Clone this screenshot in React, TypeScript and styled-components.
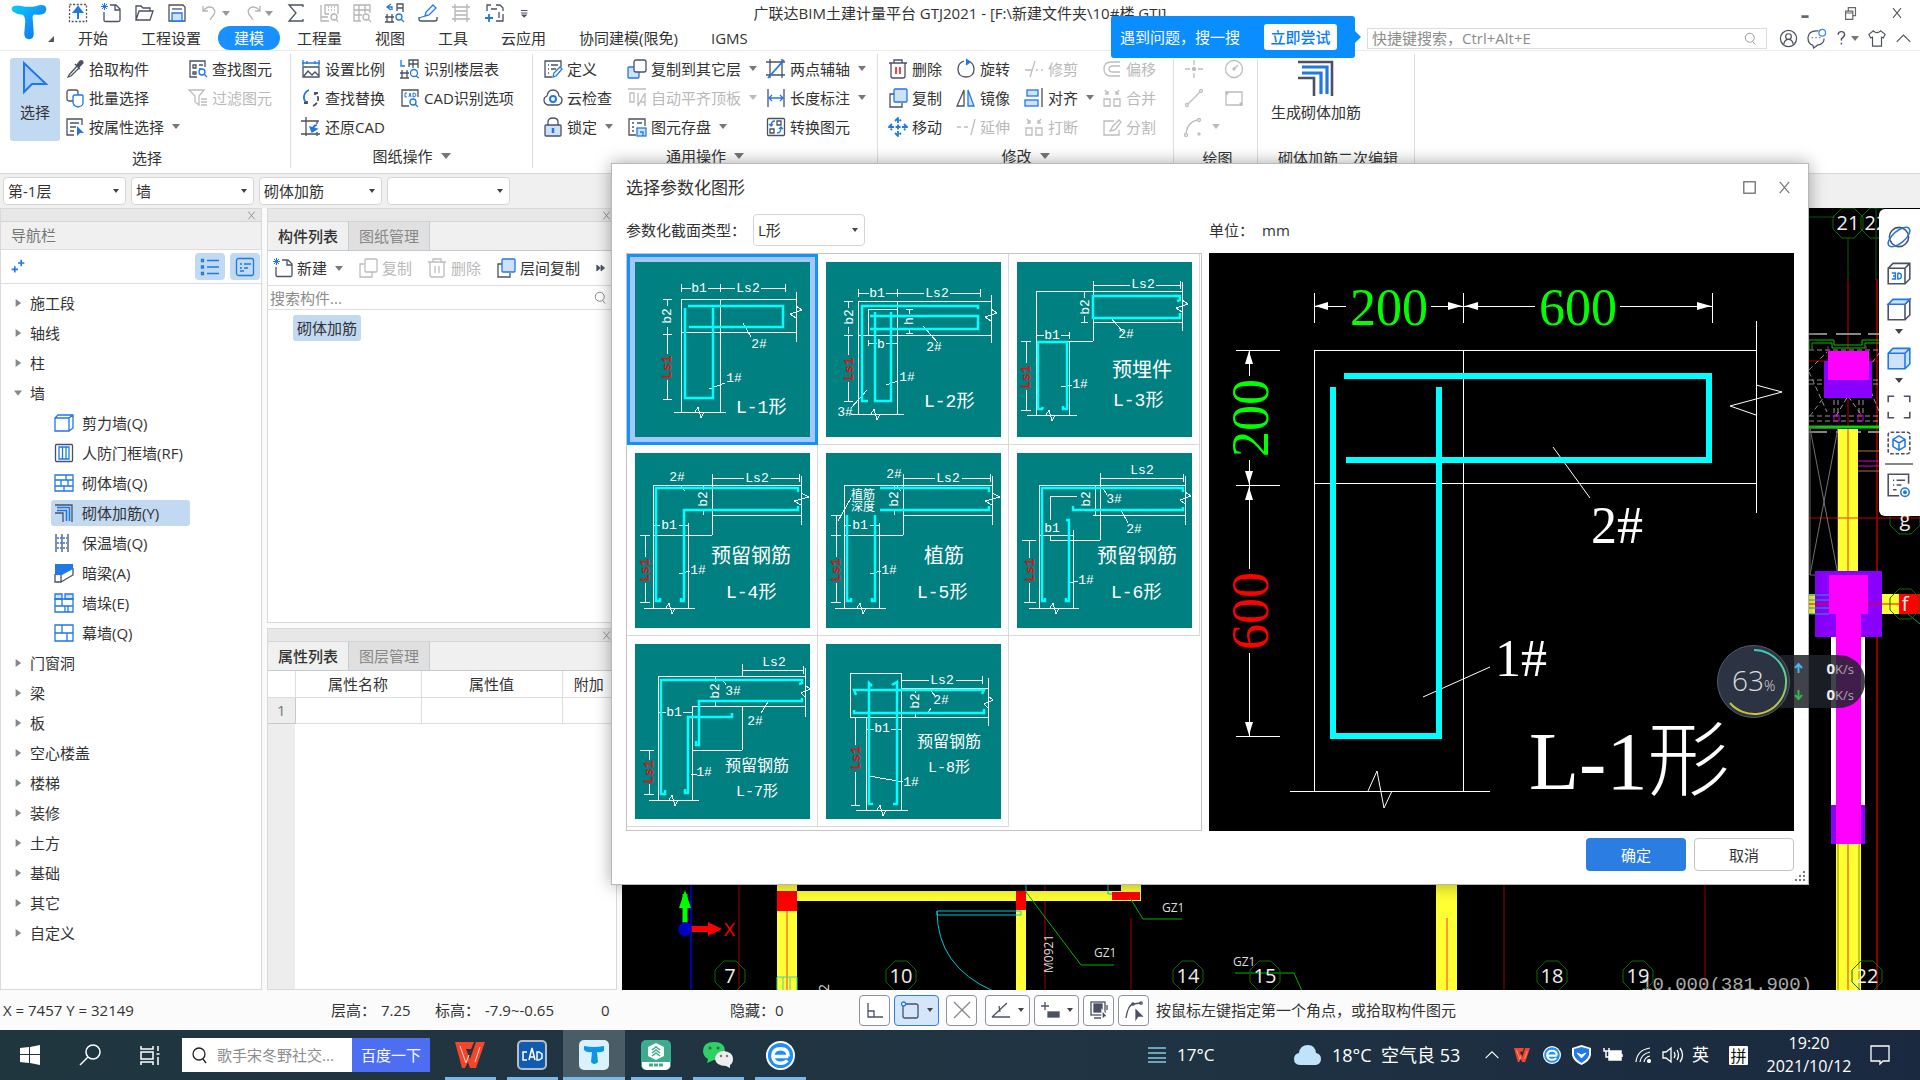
import React from 'react';
import styled, { createGlobalStyle, css } from 'styled-components';

const BLUE = '#1f78e6';
const LIGHT = '#c2d9f2';
const INK = '#4b5163';

const Global = createGlobalStyle`
  * { box-sizing: border-box; }
  html, body { margin: 0; height: 100%; }
  body, button, input, select, table {
    font-family: "Open Sans", "Noto Sans CJK SC", sans-serif;
    font-size: 15px;
    line-height: 20px;
    color: #333;
  }
  button { border: 0; background: none; padding: 0; white-space: nowrap; }
  ul { list-style: none; margin: 0; padding: 0; }
`;

/* ---------- icons, all drawn on a 20 x 20 grid ---------- */

const icons: Record<string, React.ReactNode> = {
  upload: <><rect x="1.5" y="1.5" width="17" height="17" strokeDasharray="2 1.6" /><path d="M10 16V7M6 9l4-5 4 5z" stroke={BLUE} fill={BLUE} strokeWidth="2" /></>,
  newFile: <><path d="M9 2h6l4 4v11q0 1.500-1.500 1.500h-13Q3 18.500 3 17V9M14 2v5h5" /><path d="M1 1l5 5M6 1L1 6M3.500 0v7M0 3.500h7" stroke={BLUE} strokeWidth="1" /></>,
  open: <path d="M2 17V3h5l2 2h7v3M2 17L5 8h14l-3 9z" />,
  save: <><path d="M2 2h14l2 2v14H2z" /><path d="M5 10h10v8H5z" stroke={BLUE} fill="#cfe2fb" /><path d="M5 6h10" /></>,
  undo: <path d="M3 3v5h5M3 8q5-6 10-3 4 4-1 9l-2 3" />,
  redo: <path d="M17 3v5h-5M17 8q-5-6-10-3-4 4 1 9l2 3" />,
  sigma: <path d="M17 4V2H3l7 8-7 8h14v-2" />,
  report: <><path d="M2 2v16h8M6 11V2h13v9M6 11h4M9 4h1M12 4h1M15 4h1M9 7h1M12 7h1M15 7h1M2 14h7" /><circle cx="15" cy="14" r="3" /><path d="M17 16l2 3" /></>,
  gridFind: <><path d="M9 18H2V2h16v8M2 7h16M2 12h8M7 2v16M13 2v8" /><circle cx="14" cy="14" r="3" /><path d="M16 16l3 3" /></>,
  floorFind: <><path d="M2 11v8M7 11v8M0 14h9M12 8V1h6v8M12 5h6M0 19h9" /><path d="M6 1L2 4l4 3M2 4h5v3" stroke={BLUE} /><circle cx="14" cy="14" r="3" stroke={BLUE} /><path d="M16 16l3 3" stroke={BLUE} /></>,
  pencilTray: <><path d="M1 14v2q0 2 2 2h14q2 0 2-2v-2" /><path d="M7 13l1-4 7-7 3 3-7 7zM1 15l6-2" stroke={BLUE} /></>,
  fence: <path d="M4 1v18M16 1v18M1 4h18M1 16h18M4 8h12M4 12h12" />,
  addFrame: <><path d="M3 8V2h4M12 2h4l3 3v3M19 11v7h-7M7 6h6M15 9v6" /><path d="M5 11v8M1 15h8" stroke={BLUE} strokeWidth="1.800" /></>,
  overflow: <path d="M5 7h8M5 10h8M6.500 12.500h5L9 15z" fill="currentColor" />,
  pick: <><path d="M4 16l8-9 2 2-8 8-3 1zM10 5l5 5" /><path d="M12 6l3-4q3-1 3 2l-4 4z" fill="currentColor" /></>,
  batch: <><rect x="2" y="2" width="11" height="11" rx="2" /><path d="M8 13V9q0-2 2-2h7q1 0 1 1v7q0 2-2 3l-3 1q-5-1-5-5z" stroke={BLUE} fill="#fff" /></>,
  byProp: <><path d="M17 8V2H2v16h7M5 6h9M5 10h6M5 14h4" /><path d="M12 9l7 7h-4l-3 3z" fill={BLUE} stroke="none" /></>,
  findEl: <><path d="M17 8V2H2v16h7M5 6h3v3H5zM11 6h4M5 13h3v2H5zM11 10h2" /><circle cx="14" cy="13" r="3" stroke={BLUE} /><path d="M16 15l3 3" stroke={BLUE} /></>,
  filter: <path d="M1 2h15l-5 6v9l-4-3V8zM13 11h6M13 14h6M13 17h6" />,
  scale: <><path d="M2 8h16v10H2zM3 17l4-5 4 4 3-3 4 4" /><path d="M1 4h18M2 1v6M18 1v6M6 2v3M14 2v3" stroke={BLUE} /></>,
  floorTable: <><path d="M2 11v8M7 11v8M0 14h9M9 8V1h9v8M13 1v8M9 5h9M0 19h9" /><path d="M1 1v6h4" stroke={BLUE} /><circle cx="14" cy="14" r="3.500" stroke={BLUE} /><path d="M16 17l3 2" stroke={BLUE} /></>,
  replace: <><path d="M8 2Q2 5 3 11l2 4" stroke={BLUE} strokeWidth="1.800" /><path d="M3 15h3v-4M12 18q6-3 5-9l-2-4M17 5h-3v4" strokeWidth="1.800" strokeDasharray="5 2" /></>,
  cadOpt: <><path d="M9 18H2V2h16v7" /><path d="M7 5H5v4h2M9 9l1-4 1 4M13 5v4q3 0 3-2t-3-2" stroke={BLUE} strokeWidth="1" /><circle cx="13" cy="14" r="3" stroke={BLUE} /><path d="M15 16l3 3" stroke={BLUE} /></>,
  restore: <><path d="M5 0v19M0 4h18M0 17h19M16 4v3M16 15v4" /><path d="M16 8q-4 0-4 4M9 10l2 5 5-3z" stroke={BLUE} fill={BLUE} /></>,
  define: <><path d="M18 8V2H2v16h7M5 6h1M8 6h7M5 10h1M8 10h5M5 14h1" /><path d="M10 18l1-4 6-6 2 2-6 7z" stroke={BLUE} /></>,
  cloudFind: <><path d="M5 17q-4-1-4-5 0-3 3-4 1-6 6-6t6 6q3 1 3 4 0 4-4 5z" /><circle cx="10" cy="11" r="3" stroke={BLUE} strokeWidth="2" /></>,
  lock: <><rect x="2" y="8" width="16" height="11" rx="1" fill="#cfe0f8" /><path d="M5 8V5q0-4 5-4t5 4v3" /><path d="M10 11v5" stroke={BLUE} strokeWidth="2.500" /></>,
  copyLayer: <><rect x="1" y="8" width="11" height="11" rx="1" stroke={BLUE} fill="#cfe2fb" /><rect x="7" y="1" width="12" height="12" rx="2" fill="#fff" /></>,
  flush: <path d="M1 1h18M3 5h4v9H3zM11 5v13l7-13v13M14 14h4" />,
  store: <><path d="M18 9V2H2v16h7M5 6h2M10 6h5M5 10h2M5 14h2" /><rect x="10" y="11" width="9" height="8" stroke={BLUE} fill="#cfe2fb" /><path d="M13 15h3v4" stroke={BLUE} /></>,
  axis2: <><path d="M4 0v19M16 0v19M0 3h19M0 16h19" /><path d="M2 19L18 1" stroke={BLUE} strokeWidth="1.800" /></>,
  length: <><path d="M2 1v18M18 1v18" /><path d="M3 10h14M6 7l-3 3 3 3M14 7l3 3-3 3" stroke={BLUE} /></>,
  convert: <><rect x="1.500" y="1.500" width="17" height="17" rx="1" /><path d="M11 4h4v4h-4zM4 12h4v4H4z" /><path d="M9 4Q5 4 5 9M3 7l2 2 2-2M11 16q4 0 4-5M13 12l2-2 2 2" stroke={BLUE} /></>,
  trash: <><path d="M1 4h18M6 4V1h8v3M3 4v13q0 2 2 2h10q2 0 2-2V4" /><path d="M8 8v7M12 8v7" stroke="#e33" strokeWidth="1.800" /></>,
  trashOff: <path d="M1 4h18M6 4V1h8v3M3 4v13q0 2 2 2h10q2 0 2-2V4M8 8v7M12 8v7" />,
  copy: <><path d="M6 6H2v13h12v-4" /><rect x="6" y="1" width="13" height="13" rx="1" stroke={BLUE} fill="#cfe2fb" /></>,
  copyOff: <><path d="M6 6H2v13h12v-5" /><rect x="7" y="1" width="12" height="13" rx="1" /></>,
  move: <path d="M10 1v18M1 10h18M7 4l3-3 3 3M7 16l3 3 3-3M4 7l-3 3 3 3M16 7l3 3-3 3" stroke={BLUE} strokeWidth="1.800" strokeDasharray="5 1.500" />,
  rotate: <><path d="M12 2q6 2 6 8 0 8-8 8t-8-8q0-6 6-8" /><path d="M10 0l4 3-4 3" stroke={BLUE} fill={BLUE} /></>,
  mirror: <><path d="M8 2v16H1z" /><path d="M12 2v16h6z" stroke={BLUE} fill="#cfe2fb" /></>,
  trim: <path d="M1 11h7M12 11h2M17 11h2M11 2L6 18" />,
  extend: <path d="M1 10h4M8 10h4M19 2l-4 16" />,
  align: <><path d="M18 0v19" /><rect x="3" y="2" width="11" height="6" stroke={BLUE} fill="#cfe2fb" /><rect x="1" y="12" width="13" height="6" stroke={BLUE} fill="#cfe2fb" /></>,
  offset: <path d="M18 3H9Q2 3 2 10t7 7h9M18 7h-7q-4 0-4 3t4 3h7" />,
  merge: <path d="M2 11h6v7H2zM12 11h6v7h-6zM3 2l3 4M6 3v3H3M17 2l-3 4M14 3v3h3" />,
  split: <path d="M12 4H2v14h15v-5M8 14l3-5 6-6 2 2-6 8z" />,
  point: <><path d="M10 1v5M10 14v5M1 10h5M14 10h5" /><circle cx="10" cy="10" r="1.500" fill="currentColor" /></>,
  circle: <><circle cx="10" cy="10" r="8.500" /><path d="M10 10l4-4" /><circle cx="10" cy="10" r="1" /></>,
  line: <><circle cx="3" cy="17" r="1.500" /><circle cx="17" cy="3" r="1.500" /><path d="M4 16L16 4" /></>,
  rect: <><path d="M2 4h16v13H2z" /><circle cx="3" cy="5" r="1" /><circle cx="17" cy="16" r="1" /></>,
  arc: <><circle cx="2" cy="18" r="1.500" /><circle cx="15" cy="3" r="1.500" /><path d="M2 16Q4 5 13 3" /><circle cx="15" cy="17" r="1" /></>,
  rebar: <><path d="M1 2h17v17M1 10h8v9" /><path d="M3 4.500h12.500V18M3 7.500h9.500V18" stroke={BLUE} strokeWidth="1.600" /></>,
  user: <><circle cx="10" cy="10" r="8.500" /><circle cx="10" cy="8" r="3" /><path d="M5 16q1-5 5-5t5 5" /></>,
  chat: <><path d="M12 2q-10-1-11 7 0 7 5 8l1 3 4-3q7-1 7-7M5 9h1M9 9h1M13 9h1" /><circle cx="16" cy="4" r="3.500" stroke="#3a8df0" /></>,
  help: <path d="M4 6q0-4 4-4t4 4q0 2-4 5v2M8 16v2" strokeWidth="1.800" />,
  shirt: <path d="M6 2l-5 4 2 4 2-1v10h10V9l2 1 2-4-5-4q-4 4-8 0z" />,
  chevUp: <path d="M2 14l8-8 8 8" />,
  search: <><circle cx="9" cy="9" r="6" /><path d="M13 14l3 4" /></>,
  min: <path d="M6 14h8" strokeWidth="3" />,
  win: <path d="M4 8h8v9H4zM7 8V4h8v9h-3M4 10h8" />,
  close: <path d="M5 4l10 12M15 4L5 16" />,
  max: <rect x="4" y="4" width="12" height="12" />,
  sparkle: <path d="M14 1v8M10 5h8M6 9v8M2 13h8" stroke={BLUE} strokeWidth="2" />,
  list: <path d="M7 3.500h12M7 10h12M7 16.500h12M1.500 2.500h2v2h-2zM1.500 9h2v2h-2zM1.500 15.500h2v2h-2z" stroke={BLUE} />,
  card: <><rect x="1.500" y="1.500" width="17" height="17" rx="2" stroke={BLUE} /><path d="M5 7h2M9 7h7M5 11h2M9 11h4M5 14h4" stroke={BLUE} /></>,
  wall: <path d="M1 5h14v13H1zM1 5l3-3h15v13l-4 3M15 5l4-3" stroke={BLUE} />,
  door: <><rect x="1.500" y="1.500" width="17" height="17" rx="1" /><path d="M5 4h10v12H5zM8.500 4v12M12 4v12" stroke={BLUE} /></>,
  brick: <path d="M1 2h18v16H1zM1 7h18M1 13h18M12 2v5M7 7v6M14 7v6M10 13v5" stroke={BLUE} />,
  insul: <><path d="M2 1v18M8 1v18M14 1v18" /><path d="M3 5h10M3 10h10M3 15h10" stroke={BLUE} strokeDasharray="2 1" /></>,
  beam: <><path d="M1 11v8h6v-8M7 19l12-7V5" /><path d="M1 1h18v5L8 12H1z" fill={BLUE} stroke="none" /></>,
  pier: <><path d="M1 1h7v5H1zM11 1h8v5h-8z" stroke={BLUE} fill="#cfe2fb" /><path d="M1 6h18v13H1zM8 6v7M1 13h18M11 13v6M14 13v6" stroke={BLUE} /></>,
  curtain: <path d="M1 2h18v16H1zM1 10h18M8 2v8M13 10v8" stroke={BLUE} />,
  orbit: <><circle cx="10" cy="10" r="8" /><ellipse cx="10" cy="10" rx="11" ry="5" transform="rotate(-40 10 10)" stroke={BLUE} /></>,
  cube3d: <><path d="M1 6h14v13H1zM1 6l4-4h14v13l-4 4M15 6l4-4" /><path d="M4 10h3v5H4M5 12.500h2M9 10v5q3 0 3-2.500T9 10" stroke={BLUE} strokeWidth="1.200" /></>,
  cubeTop: <><path d="M1 6h14v13H1zM15 6l4-4v13l-4 4" /><path d="M1 6l4-4h14l-4 4z" stroke={BLUE} fill="#cfe2fb" /></>,
  cubeFill: <path d="M1 6l4-4h14v13l-4 4H1zM1 6h14v13M15 6l4-4" stroke={BLUE} fill="#cfe2fb" />,
  frame: <path d="M1 6V1h5M14 1h5v5M19 14v5h-5M6 19H1v-5" />,
  cubeFrame: <><rect x="1" y="1" width="18" height="18" rx="2" strokeDasharray="3 1.500" /><path d="M10 4l5 3v6l-5 3-5-3V7zM5 7l5 3 5-3M10 10v6" stroke={BLUE} /></>,
  listEye: <><path d="M18 9V1H1v18h9M5 6h1M8 6h7M5 10h1M8 10h4M5 14h3" /><circle cx="15" cy="16" r="3.500" stroke={BLUE} /><circle cx="15" cy="16" r="1" fill={BLUE} stroke={BLUE} /></>,
  ortho: <path d="M3 3v14h15M3 11h6v6" />,
  snapRect: <><rect x="3" y="4" width="15" height="14" rx="2" /><circle cx="3.500" cy="4" r="2" stroke={BLUE} fill="#fff" /></>,
  cross: <path d="M2 2l16 16M18 2L2 18" />,
  angle: <path d="M1 17h18M1 17L16 3M8 6l1 6" />,
  plusBar: <><path d="M5 2v8M1 6h8" /><rect x="8" y="12" width="11" height="5" fill="currentColor" /></>,
  layers: <><rect x="2" y="2" width="14" height="13" /><rect x="5" y="4" width="8" height="8" fill="currentColor" /><path d="M5 18h7M18 5v5" /><path d="M13 10l6 7h-3l-3 3z" fill="currentColor" stroke="#fff" /></>,
  curve: <><path d="M2 18Q4 5 9 4l8-1" /><circle cx="9" cy="4" r="1.200" /><circle cx="17" cy="3" r="1.200" /><path d="M12 10l6 6h-4l-2 3z" fill="currentColor" /></>,
  more: <path d="M3 5l6 5-6 5zM10 5l6 5-6 5z" fill="currentColor" />,
};

const Svg = styled.svg<{ $s?: number }>`
  width: ${p => p.$s ?? 20}px;
  height: ${p => p.$s ?? 20}px;
  flex: none;
  fill: none;
  overflow: visible;
`;
const Icon = ({ n, s, c = INK }: { n: string; s?: number; c?: string }) => (
  <Svg $s={s} viewBox="0 0 20 20" stroke="currentColor" strokeWidth="1.300" color={c} aria-hidden="true">{icons[n]}</Svg>
);

const Caret = styled.i<{ $c?: string }>`
  flex: none;
  width: 0; height: 0;
  border: 4px solid transparent;
  border-top: 5px solid ${p => p.$c ?? '#777'};
  border-bottom: 0;
`;

/* ---------- header ---------- */

const Page = styled.div`
  position: relative;
  display: flex;
  flex-direction: column;
  height: 100vh;
  overflow: hidden;
  background: #fff;
`;
const Header = styled.header`
  position: relative;
  border-bottom: 1px solid #ececec;
`;
const Logo = styled.div`
  position: absolute;
  left: 10px; top: 4px;
`;
const TitleRow = styled.div`
  display: grid;
  grid-template-columns: 1fr auto 1fr;
  align-items: center;
  height: 26px;
`;
const Quick = styled.div`
  display: flex;
  align-items: center;
  gap: 13px;
  padding-left: 68px;
  button { display: flex; align-items: center; gap: 2px; }
`;
const Title = styled.h1`
  margin: 0;
  font-size: 15px;
  font-weight: 400;
`;
const WinButtons = styled.div`
  display: flex;
  justify-content: flex-end;
  button { width: 46px; height: 26px; display: grid; place-items: center; }
`;
const TabRow = styled.nav`
  display: flex;
  gap: 1px;
  height: 24px;
  padding-left: 62px;
`;
const Tab = styled.button<{ $on?: boolean }>`
  height: 24px;
  padding: 0 16px;
  border-radius: 12px;
  ${p => p.$on && css`background: #1890ff; color: #fff;`}
`;
const HeadRight = styled.div`
  display: flex;
  align-items: center;
  gap: 9px;
  margin-left: auto;
  padding-right: 8px;
  > button { display: flex; align-items: center; }
`;
const SearchWrap = styled.label`
  position: relative;
  display: flex;
  align-items: center;
  width: 400px;
  height: 21px;
  margin-right: 3px;
  padding: 0 8px 0 4px;
  border: 1px solid #dcdcdc;
`;
const PlainInput = styled.input`
  flex: 1;
  min-width: 0;
  border: 0;
  outline: 0;
  padding: 0;
  background: none;
  &::placeholder { color: #8c8c8c; opacity: 1; }
`;
const Tip = styled.div`
  position: absolute;
  right: calc(100% + 13px);
  top: -13px;
  z-index: 2;
  display: flex;
  align-items: center;
  justify-content: space-between;
  width: 244px;
  height: 42px;
  padding: 0 18px 0 9px;
  border-radius: 3px;
  background: #0a8dff;
  color: #fff;
  white-space: nowrap;
  &::after {
    content: '';
    position: absolute;
    left: 100%; top: 15px;
    border: 6px solid transparent;
    border-left-color: #0a8dff;
    border-right: 0;
  }
  button {
    width: 73px; height: 26px;
    border-radius: 3px;
    background: #fff;
    color: #0a7df5;
    font-weight: 500;
  }
`;

/* ---------- ribbon ---------- */

const Ribbon = styled.div`
  display: flex;
  height: 122px;
`;
const Group = styled.section<{ $w: number }>`
  display: flex;
  flex-direction: column;
  width: ${p => p.$w}px;
  margin: 3px 0 5px;
  padding: 0 0 0 10px;
  border-right: 1px solid #dedede;
`;
const GroupBody = styled.div`
  display: flex;
  height: 90px;
`;
const GroupName = styled.div<{ $plain?: boolean }>`
  display: flex;
  align-items: center;
  justify-content: center;
  gap: 8px;
  margin-left: ${p => (p.$plain ? -6 : -10)}px;
  padding-top: ${p => (p.$plain ? 4 : 2)}px;
  i { border-width: 6px 5px 0; }
`;
const Col = styled.div<{ $w?: number }>`
  width: ${p => (p.$w ? p.$w + 'px' : 'auto')};
`;
const ToolBtn = styled.button<{ $off?: boolean }>`
  display: flex;
  align-items: center;
  gap: 4px;
  height: 29px;
  color: ${p => (p.$off ? '#b9b9b9' : '#333')};
  i { margin-left: 4px; }
`;
const BigBtn = styled.button<{ $on?: boolean; $w: number }>`
  display: flex;
  flex-direction: column;
  align-items: center;
  gap: 4px;
  width: ${p => p.$w}px;
  height: 83px;
  margin: 4px 5px 0 0;
  padding-top: ${p => (p.$on ? 2 : 0)}px;
  border-radius: 3px;
  background: ${p => (p.$on ? LIGHT : 'none')};
`;
type ToolDef = [string, string, boolean?, boolean?];
const Tools = ({ w, items }: { w?: number; items: ToolDef[] }) => (
  <Col $w={w}>
    {items.map(([icon, text, caret, off]) => (
      <ToolBtn key={icon + text} $off={off} aria-label={text || icon}>
        <Icon n={icon} c={off ? '#bdbdbd' : INK} />
        {text}
        {caret && <Caret $c={off ? '#bbb' : undefined} />}
      </ToolBtn>
    ))}
  </Col>
);

const FilterRow = styled.div`
  display: flex;
  gap: 5px;
  height: 35px;
  padding: 3px 3px;
  border-top: 1px solid #d8d8d8;
  background: #f0f0f0;
`;
const SelectBox = styled.label<{ $w: number; $h: number }>`
  position: relative;
  width: ${p => p.$w}px;
  height: ${p => p.$h}px;
  select {
    width: 100%; height: 100%;
    appearance: none;
    padding: 0 4px;
    border: 1px solid #d5d5d5;
    border-radius: 4px;
    background: #fff;
  }
  i { position: absolute; right: 7px; top: calc(50% - 2px); border-width: 4px 3px 0; border-top-color: #444; }
`;
const Select = ({ w, h, label, value }: { w: number; h: number; label: string; value: string }) => (
  <SelectBox $w={w} $h={h}>
    <select aria-label={label}><option>{value}</option></select>
    <Caret />
  </SelectBox>
);

/* ---------- work area ---------- */

const Work = styled.main`
  flex: 1;
  min-height: 0;
  display: grid;
  grid-template-columns: 262px 350px 1fr;
  column-gap: 5px;
  background: #fafafa;
`;
const Panel = styled.section<{ $grow?: boolean }>`
  display: flex;
  flex-direction: column;
  min-height: 0;
  flex: ${p => (p.$grow ? '1' : 'none')};
  border: 1px solid #d9d9d9;
  background: #fff;
`;
const Strip = styled.div`
  display: flex;
  justify-content: flex-end;
  align-items: center;
  height: 13px;
  padding-right: 3px;
  background: #e7e7e7;
  border-bottom: 1px solid #d4d4d4;
  button { display: flex; }
`;
const NavTitle = styled.h2`
  margin: 0;
  height: 28px;
  padding: 3px 10px;
  font-size: 15px;
  font-weight: 400;
  color: #777;
  background: #f0f0f0;
  border-bottom: 1px solid #ddd;
`;
const NavTools = styled.div`
  display: flex;
  align-items: center;
  gap: 5px;
  height: 34px;
  padding: 0 1px 0 9px;
  border-bottom: 1px solid #ddd;
  span { flex: 1; }
`;
const SquareBtn = styled.button`
  display: grid;
  place-items: center;
  width: 30px; height: 27px;
  border-radius: 4px;
  background: ${LIGHT};
`;
const Tree = styled.ul`
  padding-top: 4px;
`;
const Node = styled.button`
  display: flex;
  align-items: center;
  height: 30px;
  padding-left: 13px;
  gap: 8px;
`;
const Arrow = styled.i<{ $open?: boolean }>`
  width: 8px; height: 8px;
  background: #888;
  clip-path: ${p => (p.$open ? 'polygon(0 20%, 100% 20%, 50% 85%)' : 'polygon(20% 0, 90% 50%, 20% 100%)')};
`;
const LeafRow = styled.li`
  display: flex;
  align-items: center;
  height: 30px;
  padding-left: 50px;
`;
const Leaf = styled.button<{ $on?: boolean }>`
  display: flex;
  align-items: center;
  gap: 8px;
  width: 139px;
  height: 26px;
  padding-left: 3px;
  border-radius: 3px;
  background: ${p => (p.$on ? LIGHT : 'none')};
`;
const MidCol = styled.div`
  display: flex;
  flex-direction: column;
  gap: 5px;
  min-height: 0;
  min-width: 0;
`;
const PanelTabs = styled.div`
  display: flex;
  height: 29px;
  background: #f0f0f0;
  border-bottom: 1px solid #c6cbd3;
`;
const PanelTab = styled.button<{ $on?: boolean }>`
  width: 81px;
  border: 1px solid #c6cbd3;
  border-width: 0 1px 0 0;
  background: ${p => (p.$on ? '#f0f0f0' : '#e0e0e0')};
  color: ${p => (p.$on ? '#333' : '#888')};
  font-weight: ${p => (p.$on ? 500 : 400)};
`;
const ListTools = styled.div`
  display: flex;
  align-items: center;
  gap: 15px;
  height: 35px;
  padding-left: 5px;
  border-bottom: 1px solid #ddd;
  overflow: hidden;
`;
const ListSearch = styled.label`
  display: flex;
  align-items: center;
  height: 24px;
  padding: 0 8px 0 2px;
  border-bottom: 1px solid #ddd;
`;
const ListBody = styled.ul`
  height: 312px;
  padding: 5px 0 0 25px;
  button { height: 26px; padding: 0 4px; border-radius: 3px; background: ${LIGHT}; }
`;
const PropArea = styled.div`
  flex: 1;
  background: linear-gradient(90deg, #ededed 27px, #fff 27px);
`;
const PropTable = styled.table`
  width: 100%;
  table-layout: fixed;
  border-collapse: collapse;
  background: #fff;
  th, td {
    height: 26px;
    padding: 0;
    border: 1px solid #ddd;
    border-width: 0 1px 1px 0;
    font-weight: 400;
    text-align: center;
  }
  tbody th { background: #ededed; color: #777; border-color: #c8c8c8; }
`;

/* ---------- drawing canvas ---------- */

const Stage = styled.div`
  position: relative;
  min-width: 0;
  overflow: hidden;
  background: #000;
`;
const Drawing = styled.svg`
  display: block;
  width: 100%;
  height: 100%;
  fill: none;
  text { font-family: "Open Sans", sans-serif; }
`;
const Elevation = styled.text`
  && { font-family: "Liberation Mono", monospace; }
  font-size: 19px;
  fill: #aaa;
`;
const Bubble = ({ x, y, t }: { x: number; y: number; t: string }) => (
  <g>
    <path d={`M${x - 6} ${y - 15}h12l9 9v12l-9 9h-12l-9-9v-12z`} stroke="#0a6a0a" />
    <text x={x} y={y + 7} fontSize="20" fill="#eee" textAnchor="middle">{t}</text>
  </g>
);
const ViewTools = styled.aside`
  position: absolute;
  right: 0; top: 1px;
  display: flex;
  flex-direction: column;
  align-items: center;
  gap: 12px;
  width: 41px;
  height: 307px;
  padding: 16px 2px 0 0;
  border-radius: 6px 0 0 6px;
  background: #fff;
  button { display: flex; flex-direction: column; align-items: center; gap: 8px; }
  svg { width: 24px; height: 24px; }
  hr { width: 28px; height: 2px; margin: -4px 0; border: 0; background: #888; }
`;

const Plan = () => (
  <Drawing viewBox="622 208 1298 782" preserveAspectRatio="xMinYMin slice" aria-label="平面图">
    <path d="M739 880v110M1045 880v110M1131 918v72M1504 880v110M1705 880v110" stroke="#a00000" />
    <path d="M691 880v110" stroke="#0000b0" strokeWidth="2" />
    <path d="M777 880h20v110h-20zM797 891h344v10H797zM1016 900h10v90h-10zM1121 880h20v12h-20zM1436 880h21v110h-21z" fill="#ffff33" />
    <path d="M777 891h20v20h-20zM1016 891h10v19h-10zM1112 892h28v8h-28z" fill="#f00" />
    <path d="M787 911v79M1447 918v72" stroke="#f33" />
    <path d="M777 977h20M777 977v13M783 977v13M790 977v13M797 977v13" stroke="#3fd8a0" />
    <path d="M937 911h84v4h-84zM937 911q0 55 56 80M1026 880v12M1108 880v14h4" stroke="#00c8d8" />
    <path d="M1026 892l55 73h33M1130 898l13 21h39M1235 973h59l8 18" stroke="#00b400" />
    <path d="M685 928v-34" stroke="#0f0" strokeWidth="5" />
    <path d="M679 908l6-18 6 18z" fill="#0f0" />
    <path d="M685 929h28" stroke="#f00" strokeWidth="6" />
    <path d="M708 922l14 7-14 7z" fill="#f00" />
    <circle cx="685" cy="929" r="7" fill="#0000c0" />
    <text x="724" y="936" fontSize="19" fill="#f00">X</text>
    <g fontSize="12" fill="#ddd">
      <text x="1162" y="912">GZ1</text>
      <text x="1094" y="957">GZ1</text>
      <text x="1233" y="966">GZ1</text>
      <text transform="translate(1053 973) rotate(-90)">M0921</text>
      <text transform="translate(829 992) rotate(-90)" fontSize="14">2</text>
    </g>
    <Elevation x="1641" y="990">10.000(381.900)</Elevation>
    <Bubble x={730} y={976} t="7" /><Bubble x={901} y={976} t="10" /><Bubble x={1188} y={976} t="14" />
    <Bubble x={1265} y={976} t="15" /><Bubble x={1552} y={976} t="18" /><Bubble x={1638} y={976} t="19" />

    <path d="M1800 217h35M1848 238v42M1876 208v72" stroke="#0a5a0a" />
    <path d="M1877 279v711" stroke="#8a0000" strokeWidth="2" />
    <path d="M1848 279v148M1809 361h71M1809 518h111" stroke="#c00000" />
    <path d="M1809 334h18M1836 334h25M1868 334h12M1809 432h18M1836 432h25M1868 432h12" stroke="#888" strokeWidth="2" />
    <path d="M1809 350h71M1809 380h71M1809 384h71M1809 416h71M1809 421h71M1834 384v32M1838 384v32M1859 384v32M1863 384v32M1809 370l18-18M1809 372l18 40M1810 416l22-30M1836 416l12-20 14 20M1880 352l-12 16M1868 384l12 30" stroke="#999" strokeDasharray="5 3" />
    <path d="M1809 350v-10h25v5h28v-5h18M1812 350v-7h20v5h33v-5h15" stroke="#00c800" />
    <path d="M1809 427h71" stroke="#00d800" strokeWidth="3" />
    <path d="M1824 361h48v37h-48z" fill="#8a00ff" />
    <path d="M1828 351h41v29h-41z" fill="#f0f" />
    <path d="M1834 415h5v6h-5zM1858 415h5v6h-5zM1828 346v6M1866 346v6" stroke="#c0c" />
    <path d="M1810 428h28v147h-28zM1810 428l28 147M1838 428l-28 147" stroke="#777" />
    <path d="M1838 429h20v146h-20zM1809 594h90v20h-90zM1836 844h25v146h-25z" fill="#ffff33" />
    <path d="M1858 451h22M1858 471h22" stroke="#b07040" />
    <path d="M1858 461h22M1858 466h22" stroke="#d0d" />
    <path d="M1848 429v146M1848 844v146M1838 518h20" stroke="#e04000" />
    <path d="M1838 844v146M1859 844v146" stroke="#998c00" />
    <path d="M1899 594h21v20h-21z" fill="#f00" />
    <path d="M1815 571h67v66h-67zM1831 805h34v39h-34z" fill="#8a00ff" />
    <path d="M1831 637h34v168h-34z" fill="#fff" />
    <path d="M1829 575h39v39h-7v230h-25V614h-7z" fill="#f0f" />
    <path d="M1809 595h20M1809 600h20M1809 608h20M1809 614h20" stroke="#20a0e0" />
    <path d="M1809 604h20M1868 604h52" stroke="#f00" />
    <path d="M1908 614l12 10" stroke="#0a0" />
    <Bubble x={1848} y={223} t="21" /><Bubble x={1876} y={223} t="22" />
    <Bubble x={1905} y={519} t="g" /><Bubble x={1905} y={604} t="f" /><Bubble x={1867} y={976} t="22" />
  </Drawing>
);

/* ---------- dialog ---------- */

const Dialog = styled.section`
  position: absolute;
  left: 611px; top: 163px;
  width: 1198px;
  display: flex;
  flex-direction: column;
  padding: 0 14px 13px;
  border: 1px solid #b8b8b8;
  background: #fff;
  box-shadow: 0 0 16px rgba(0, 0, 0, .35);
`;
const DlgHead = styled.header`
  display: flex;
  align-items: center;
  height: 47px;
  h2 { flex: 1; margin: 0; font-size: 17px; font-weight: 400; }
  button { display: flex; margin-left: 16px; }
`;
const DlgForm = styled.div`
  display: grid;
  grid-template-columns: 127px 112px 1fr 585px;
  align-items: center;
  height: 42px;
  padding-bottom: 4px;
  > div { grid-column: 4; display: flex; gap: 8px; }
`;
const DlgBody = styled.div`
  display: grid;
  grid-template-columns: 576px 585px;
  justify-content: space-between;
`;
const Gallery = styled.div`
  display: grid;
  grid-template-columns: repeat(3, 191px);
  grid-auto-rows: 191px;
  height: 578px;
  border: 1px solid #c4c4c4;
`;
const Cell = styled.button<{ $on?: boolean }>`
  display: grid;
  place-items: center;
  border: 1px solid #d9d9d9;
  border-width: 0 1px 1px 0;
  ${p => p.$on && css`
    border: 3px solid #1391ff;
    background: #a5c8fb;
  `}
`;
const Thumb = styled.svg`
  display: block;
  width: 175px; height: 175px;
  background: #008080;
  fill: none;
  text { font-family: "Liberation Mono", "Noto Sans CJK SC", monospace; font-size: 13px; fill: #fff; }
`;
const RedText = styled.text`
  && { fill: #e01010; font-weight: 700; }
`;
const Preview = styled.svg`
  display: block;
  width: 585px; height: 578px;
  background: #000;
  fill: none;
  text { font-family: "Liberation Serif", "Noto Sans CJK SC", serif; font-weight: 300; font-size: 52px; fill: #fff; }
`;
const DlgFoot = styled.footer`
  display: flex;
  justify-content: flex-end;
  gap: 8px;
  padding-top: 7px;
`;
const DlgBtn = styled.button<{ $main?: boolean }>`
  width: 100px; height: 33px;
  border-radius: 4px;
  ${p => (p.$main ? css`background: #2b7de1; color: #fff;` : css`border: 1px solid #c4c4c4;`)}
`;
const Grip = styled.svg`
  position: absolute;
  right: 3px; bottom: 3px;
  width: 10px; height: 10px;
`;

type Dim = [string, number, number];
type Shape = {
  white: string;
  cyan: string;
  red: Dim;
  up: Dim[];
  flat: Dim[];
  names: [string, number, number, number][];
};

const shapes: Shape[] = [
  {
    white: 'M46 22v8M85 22v8M150 22v8M46 26h10M73 26h27M126 26h24M28 37h9M28 72h9M28 137h9M32 37v7M32 65v7M32 72v20M32 118v19M46 37h115M46 37v113M85 37v113M46 70h115M161 30v50M161 44l6 4-12 4 6 4M39 150h52M60 150l3-5 3 11 3-6M108 61l8 14M74 127l16-6',
    cyan: 'M53 44h95v21H54M50 46v90h28V46',
    red: ['Ls1', 36, 105], up: [['b2', 36, 54]],
    flat: [['b1', 64, 30], ['Ls2', 113, 30], ['2#', 124, 86], ['1#', 99, 120]],
    names: [['L-1形', 101, 151, 18]],
  },
  {
    white: 'M32 27v8M71 27v8M154 27v8M32 31h11M60 31h38M124 31h30M18 39h9M18 73h9M18 139h9M22 39v7M22 65v7M22 73v20M22 120v19M32 39h133M32 73h133M32 39v113M71 39v113M165 33v48M165 47l6 4-12 4 6 4M25 152h53M45 152l3-5 3 11 3-6M42 47h29M42 47v26M42 78v6M42 81h9M60 81h11M83 47v5M83 66v5M80 47h7M80 71h7M97 64l15 17M60 123l12-4M41 128l-16 18',
    cyan: 'M152 47v-3H36v95h6M44 54h108v13H44M49 50v89h16V50',
    red: ['Ls1', 27, 107], up: [['b2', 27, 55], ['h', 87, 59]],
    flat: [['b1', 51, 35], ['Ls2', 111, 35], ['b', 55, 86], ['2#', 108, 89], ['1#', 81, 119], ['3#', 19, 154]],
    names: [['L-2形', 98, 145, 18]],
  },
  {
    white: 'M76 19v10M163 19v8M76 23h37M139 23h24M19 29h146M19 29v124M19 79h57M76 29v50M76 60h89M165 20v49M165 38l6 4-12 4 6 4M52 79v74M10 153h50M29 153l3-5 3 11 3-6M64 29h7M64 60h7M67 29v7M67 54v6M19 70v7M52 70v7M19 73h8M44 73h8M4 79h10M4 148h10M9 79v22M9 128v20M93 55l14 16M44 125l11-2',
    cyan: 'M160 39l3-1v-4H76v22h87v-5M26 145l-1 2h-4V80h29v67h-4v-3',
    red: ['Ls1', 13, 115], up: [['b2', 72, 45]],
    flat: [['Ls2', 126, 26], ['b1', 35, 77], ['2#', 109, 76], ['1#', 63, 126]],
    names: [['预埋件', 95, 115, 20], ['L-3形', 96, 144, 18]],
  },
  {
    white: 'M77 21v10M164 21v8M77 25h32M136 25h28M18 32h148M18 32v123M18 82h59M77 29v53M77 62h89M166 23v49M166 40l8 4-15 4 7 4M53 70v85M9 155h51M31 155l3-5 3 11 3-6M68 32v5M68 57v5M18 72h7M44 72h9M5 82h10M5 149h10M10 82v22M10 130v19M45 32l5 6M44 121l11-3',
    cyan: 'M163 39v-4H21v113h4v-3M163 53v4H49v91h-3v-3',
    red: ['Ls1', 14, 117], up: [['b2', 72, 46]],
    flat: [['Ls2', 122, 29], ['b1', 34, 76], ['2#', 42, 28], ['1#', 63, 121]],
    names: [['预留钢筋', 76, 110, 20], ['L-4形', 91, 145, 18]],
  },
  {
    white: 'M77 21v10M164 21v8M77 25h32M136 25h28M18 32h148M18 32v123M18 82h59M77 29v53M77 62h89M166 23v49M166 40l8 4-15 4 7 4M53 70v85M9 155h51M31 155l3-5 3 11 3-6M68 32v5M68 57v5M18 72h7M44 72h9M5 62h10M5 82h10M5 149h10M10 62v42M10 130v19M70 32l5 6M12 68l13-23M44 121l11-3',
    cyan: 'M54 35h109v4M54 57h109v-4M21 62v86h4v-3M49 62v86h-3v-3',
    red: ['Ls1', 14, 117], up: [['b2', 72, 46]],
    flat: [['Ls2', 122, 29], ['b1', 34, 76], ['2#', 68, 25], ['1#', 63, 121]],
    names: [['植筋', 25, 46, 12], ['深度', 25, 58, 12], ['植筋', 98, 110, 20], ['L-5形', 91, 145, 18]],
  },
  {
    white: 'M83 20v67M166 21v8M83 25h83M22 32h146M22 32v123M22 82h34M56 77v78M33 87h50M33 43v24M33 83v4M33 43h27M76 62h92M78 32v30M168 23v49M168 39l6 4-11 4 5 4M12 155h50M33 155l3-5 3 11 3-6M5 87h14M7 149h12M12 87v18M12 130v19M86 35l4 7M104 57l7 13M53 130l8-2',
    cyan: 'M166 39v-4H25v113h3v-3M166 54v3H56v-4M49 67h3v81h-3v-3',
    red: ['Ls1', 17, 117], up: [['b2', 73, 46]],
    flat: [['Ls2', 125, 21], ['b1', 35, 79], ['3#', 97, 50], ['2#', 117, 80], ['1#', 69, 131]],
    names: [['预留钢筋', 80, 110, 20], ['L-6形', 94, 145, 18]],
  },
  {
    white: 'M107 20v12M168 22v8M107 26h61M23 32h147M23 32v124M57 62v94M57 62h113M107 62v44M57 106h50M170 24v49M170 41l5 4-9 4 4 4M14 156h50M34 156l3-5 3 11 3-6M80 32v6M80 57v5M23 68h8M48 68h9M5 106h14M9 150h10M14 106v10M14 140v10M88 36l3 5M133 58l-7 11M56 131l6-1',
    cyan: 'M164 40l3-1v-3H26v114h4v-4M167 54v3H64v44h-3v-4M97 69v4H53v76h-3v-4',
    red: ['Ls1', 18, 128], up: [['b2', 84, 47]],
    flat: [['Ls2', 139, 22], ['b1', 39, 72], ['3#', 98, 51], ['2#', 120, 81], ['1#', 69, 132]],
    names: [['预留钢筋', 90, 127, 16], ['L-7形', 101, 152, 15]],
  },
  {
    white: 'M24 29h51v44H24zM75 36h28M130 36h26M156 32v8M75 44h87M75 73h87M162 34v48M162 52l5 4-9 4 4 4M40 73v93M75 73v93M30 166h52M51 166l3-5 3 11 3-6M89 44v5M89 68v5M40 85h8M65 85h10M29 73v28M29 128v33M25 161h9M105 47l5 6M105 64l-4 6M43 132l34 6',
    cyan: 'M30 51l-2-5h130l-2 4M28 66v3h130v-4M46 42l-3-3v121h4M66 41l5-3v122h-4',
    red: ['Ls1', 34, 114], up: [['b2', 93, 57]],
    flat: [['Ls2', 116, 40], ['b1', 56, 88], ['2#', 115, 60], ['1#', 85, 142]],
    names: [['预留钢筋', 91, 103, 16], ['L-8形', 102, 128, 15]],
  },
];

const ShapeThumb = ({ s }: { s: Shape }) => (
  <Thumb viewBox="0 0 175 175">
    <path d={s.white} stroke="#fff" shapeRendering="crispEdges" />
    <path d={s.cyan} stroke="#0ff" strokeWidth="2.500" />
    {s.flat.map(([t, x, y]) => <text key={t + x} x={x} y={y} textAnchor="middle">{t}</text>)}
    {s.up.map(([t, x, y]) => <text key={t + x} transform={`translate(${x} ${y}) rotate(-90)`} textAnchor="middle">{t}</text>)}
    <RedText transform={`translate(${s.red[1]} ${s.red[2]}) rotate(-90)`} textAnchor="middle">{s.red[0]}</RedText>
    {s.names.map(([t, x, y, f]) => <text key={t + x} x={x} y={y} style={{ fontSize: f }}>{t}</text>)}
  </Thumb>
);

const ShapePreview = () => (
  <Preview viewBox="0 0 585 578" aria-label="L-1形">
    <g stroke="#fff" shapeRendering="crispEdges">
      <path d="M105 40v30M254 40v30M503 40v30M105 53h32M222 53h32M254 53h72M411 53h92" />
      <path d="M27 97h44M27 232h44M27 483h44M40 97v26M40 207v25M40 232v84M40 400v83" />
      <path d="M105 97h442M105 97v441M254 97v441M105 230h442M547 68v192M81 538h200" />
    </g>
    <path d="M547 132l26 7-52 14 26 9M159 538l9-20 7 37 8-17M344 194l37 51M214 444l67-30" stroke="#fff" />
    <path d="M106 53l13-4v8zM253 53l-14-4v8zM256 53l13-4v8zM502 53l-14-4v8zM40 98l-4 13h8zM40 231l-4-13h8zM40 234l-4 13h8zM40 482l-4-13h8z" fill="#fff" />
    <path d="M135 123h365v84H137M124 134v349h106V134" stroke="#0ff" strokeWidth="6" />
    <text x="180" y="72" textAnchor="middle" style={{ fill: '#0f0' }}>200</text>
    <text x="369" y="72" textAnchor="middle" style={{ fill: '#0f0' }}>600</text>
    <text transform="translate(59 165) rotate(-90)" textAnchor="middle" style={{ fill: '#0f0' }}>200</text>
    <text transform="translate(59 358) rotate(-90)" textAnchor="middle" style={{ fill: '#f00' }}>600</text>
    <text x="382" y="290">2#</text>
    <text x="286" y="423">1#</text>
    <text x="320" y="536" style={{ fontSize: 82 }}>L-1形</text>
  </Preview>
);

/* ---------- speed widget ---------- */

const Speed = styled.div`
  position: absolute;
  left: 1717px; top: 645px;
  display: flex;
  align-items: center;
`;
const Dial = styled.svg`
  position: relative;
  z-index: 1;
  width: 73px; height: 73px;
  fill: none;
`;
const Rates = styled.div`
  display: grid;
  grid-template-columns: 12px 1fr;
  align-items: center;
  width: 85px;
  height: 53px;
  margin-left: -10px;
  padding: 0 11px 0 14px;
  border-radius: 0 26px 26px 0;
  background: rgba(32, 34, 44, .85);
  color: #aaa;
  font-size: 13px;
  text-align: right;
  b { color: #eee; font-size: 15px; }
`;

/* ---------- status bar ---------- */

const Status = styled.footer`
  display: flex;
  align-items: center;
  height: 40px;
  padding-left: 3px;
  background: #fbfbfb;
  white-space: nowrap;
`;
const Field = styled.span<{ $w: number }>`
  width: ${p => p.$w}px;
`;
const StatBtn = styled.button<{ $wide?: boolean; $on?: boolean }>`
  display: flex;
  align-items: center;
  justify-content: center;
  gap: 7px;
  width: ${p => (p.$wide ? 45 : 31)}px;
  height: 31px;
  margin-right: 4px;
  border: 1px solid ${p => (p.$on ? '#2f7de0' : '#8e929c')};
  border-radius: 4px;
  background: ${p => (p.$on ? '#d6e6fa' : '#fff')};
  i { border-width: 4px 3px 0; border-top-color: #444; }
`;

/* ---------- taskbar ---------- */

const Taskbar = styled.footer`
  display: flex;
  align-items: center;
  height: 50px;
  background: linear-gradient(90deg, #20363f, #1f3342 60%, #1a2940);
  color: #fff;
  button { color: #fff; }
`;
const SysBtn = styled.button<{ $w: number }>`
  display: grid;
  place-items: center;
  width: ${p => p.$w}px;
  height: 50px;
`;
const WebSearch = styled.form`
  display: flex;
  height: 34px;
  margin: 0 9px 0 2px;
  label { display: flex; align-items: center; gap: 7px; width: 170px; padding-left: 8px; background: #fff; }
  button { width: 78px; background: #4e6ef2; }
`;
const TaskApp = styled.button<{ $on?: boolean }>`
  display: grid;
  place-items: center;
  width: 62px;
  height: 50px;
  background: linear-gradient(#76b9ed, #76b9ed) bottom / ${p => (p.$on ? 62 : 51)}px 3px no-repeat, ${p => (p.$on ? '#4a5d66' : 'transparent')};
`;
const Tray = styled.div`
  display: flex;
  align-items: center;
  margin-left: auto;
  font-size: 17px;
  white-space: nowrap;
`;
const TrayItem = styled.div<{ $w: number }>`
  display: flex;
  align-items: center;
  gap: 11px;
  width: ${p => p.$w}px;
`;
const Weather = styled.span`
  font-size: 18px;
`;
const Clock = styled.time`
  width: 122px;
  font-size: 16px;
  line-height: 23px;
  text-align: center;
`;
const Ime = styled.span`
  display: grid;
  place-items: center;
  width: 19px; height: 19px;
  border-radius: 1px;
  background: #fff;
  color: #111;
  font-size: 16px;
`;

const TLogo = ({ s }: { s: number }) => (
  <svg width={s} height={s} viewBox="0 0 40 40" aria-hidden="true">
    <defs>
      <linearGradient id="tl" x1="0" y1="0" x2="1" y2="1">
        <stop offset="0" stopColor="#08d0f8" /><stop offset=".5" stopColor="#1297f6" /><stop offset="1" stopColor="#0a6cf0" />
      </linearGradient>
    </defs>
    <path d="M4 2q4-1 8 0 8 2 16 0 5-2 9 0 3 4-1 8-4 2-10 1-3 0-2 6l1 14q0 6-5 6t-5-6l1-12q0-8-4-8-5 0-9-3Q0 4 4 2z" fill="url(#tl)" />
  </svg>
);
const WpsMark = ({ s }: { s: number }) => (
  <svg width={s} height={s} viewBox="0 0 30 30" aria-hidden="true">
    <path d="M0 2h19l-3 7h-5l4 10 6-17h9l-9 26h-6l-2-6-3 6H7z" fill="#f2452c" />
    <path d="M5 6l6 17 3-8M20 22l5-15" stroke="#ffd9c8" strokeWidth="1" fill="none" />
  </svg>
);
const EMark = ({ s }: { s: number }) => (
  <svg width={s} height={s} viewBox="0 0 30 30" aria-hidden="true">
    <circle cx="15" cy="15" r="15" fill="#fff" /><circle cx="15" cy="15" r="13" fill="#1e90f5" />
    <path d="M23 16H8M23 16q0-8-8-8t-8 8q1 7 8 7 5 0 7-3" stroke="#fff" strokeWidth="3.500" fill="none" />
  </svg>
);

const nav = ['施工段', '轴线', '柱', '墙', '门窗洞', '梁', '板', '空心楼盖', '楼梯', '装修', '土方', '基础', '其它', '自定义'];
const walls: [string, string][] = [
  ['wall', '剪力墙(Q)'], ['door', '人防门框墙(RF)'], ['brick', '砌体墙(Q)'], ['rebar', '砌体加筋(Y)'],
  ['insul', '保温墙(Q)'], ['beam', '暗梁(A)'], ['pier', '墙垛(E)'], ['curtain', '幕墙(Q)'],
];
const CloseStrip = () => <Strip><button aria-label="关闭面板"><Icon n="close" s={13} c="#888" /></button></Strip>;

export default function App() {
  return (
    <Page>
      <Global />
      <Header>
        <Logo>
          <TLogo s={38} />
          <svg width="6" height="6" viewBox="0 0 6 6"><path d="M6 0v6H0z" fill="#555" /></svg>
        </Logo>
        <TitleRow>
          <Quick>
            {['upload', 'newFile', 'open', 'save'].map(n => <button key={n} aria-label={n}><Icon n={n} /></button>)}
            <button aria-label="撤销"><Icon n="undo" c="#b5b5b5" /><Caret $c="#999" /></button>
            <button aria-label="恢复"><Icon n="redo" c="#b5b5b5" /><Caret $c="#999" /></button>
            <button aria-label="汇总"><Icon n="sigma" /></button>
            <button aria-label="报表"><Icon n="report" c="#b5b5b5" /></button>
            <button aria-label="表格"><Icon n="gridFind" c="#b5b5b5" /></button>
            <button aria-label="楼层"><Icon n="floorFind" /></button>
            <button aria-label="编辑"><Icon n="pencilTray" /></button>
            <button aria-label="栅格"><Icon n="fence" c="#b5b5b5" /></button>
            <button aria-label="添加"><Icon n="addFrame" /></button>
            <button aria-label="更多"><Icon n="overflow" s={16} /></button>
          </Quick>
          <Title>广联达BIM土建计量平台 GTJ2021 - [F:\新建文件夹\10#楼.GTJ]</Title>
          <WinButtons>
            <button aria-label="最小化"><Icon n="min" s={18} c="#666" /></button>
            <button aria-label="还原"><Icon n="win" s={18} c="#666" /></button>
            <button aria-label="关闭"><Icon n="close" s={16} c="#555" /></button>
          </WinButtons>
        </TitleRow>
        <TabRow>
          {['开始', '工程设置', '建模', '工程量', '视图', '工具', '云应用', '协同建模(限免)', 'IGMS'].map(t => (
            <Tab key={t} $on={t === '建模'}>{t}</Tab>
          ))}
          <HeadRight>
            <SearchWrap>
              <PlainInput aria-label="快捷键搜索" placeholder="快捷键搜索，Ctrl+Alt+E" />
              <Icon n="search" s={15} c="#999" />
              <Tip>遇到问题，搜一搜<button>立即尝试</button></Tip>
            </SearchWrap>
            <button aria-label="用户"><Icon n="user" s={19} /></button>
            <button aria-label="消息"><Icon n="chat" s={19} /></button>
            <button aria-label="帮助"><Icon n="help" s={16} /><Caret /></button>
            <button aria-label="皮肤"><Icon n="shirt" s={18} /></button>
            <button aria-label="收起"><Icon n="chevUp" s={17} /></button>
          </HeadRight>
        </TabRow>
      </Header>

      <Ribbon>
        <Group $w={291}>
          <GroupBody>
            <BigBtn $on $w={50}>
              <svg width="34" height="38" viewBox="0 0 34 38"><path d="M6 3v29l8-8h14z" fill="#a9cdf8" stroke={BLUE} strokeWidth="2" /></svg>
              选择
            </BigBtn>
            <Tools w={123} items={[['pick', '拾取构件'], ['batch', '批量选择'], ['byProp', '按属性选择', true]]} />
            <Tools items={[['findEl', '查找图元'], ['filter', '过滤图元', false, true]]} />
          </GroupBody>
          <GroupName $plain>选择</GroupName>
        </Group>
        <Group $w={242}>
          <GroupBody>
            <Tools w={99} items={[['scale', '设置比例'], ['replace', '查找替换'], ['restore', '还原CAD']]} />
            <Tools items={[['floorTable', '识别楼层表'], ['cadOpt', 'CAD识别选项']]} />
          </GroupBody>
          <GroupName>图纸操作<Caret /></GroupName>
        </Group>
        <Group $w={345}>
          <GroupBody>
            <Tools w={84} items={[['define', '定义'], ['cloudFind', '云检查'], ['lock', '锁定', true]]} />
            <Tools w={139} items={[['copyLayer', '复制到其它层', true], ['flush', '自动平齐顶板', true, true], ['store', '图元存盘', true]]} />
            <Tools items={[['axis2', '两点辅轴', true], ['length', '长度标注', true], ['convert', '转换图元']]} />
          </GroupBody>
          <GroupName>通用操作<Caret /></GroupName>
        </Group>
        <Group $w={296}>
          <GroupBody>
            <Tools w={68} items={[['trash', '删除'], ['copy', '复制'], ['move', '移动']]} />
            <Tools w={68} items={[['rotate', '旋转'], ['mirror', '镜像'], ['extend', '延伸', false, true]]} />
            <Tools w={78} items={[['trim', '修剪', false, true], ['align', '对齐', true], ['merge', '打断', false, true]]} />
            <Tools items={[['offset', '偏移', false, true], ['merge', '合并', false, true], ['split', '分割', false, true]]} />
          </GroupBody>
          <GroupName>修改<Caret /></GroupName>
        </Group>
        <Group $w={84}>
          <GroupBody>
            <Tools w={40} items={[['point', '', false, true], ['line', '', false, true], ['arc', '', true, true]]} />
            <Tools items={[['circle', '', false, true], ['rect', '', false, true]]} />
          </GroupBody>
          <GroupName $plain>绘图</GroupName>
        </Group>
        <Group $w={157}>
          <GroupBody>
            <BigBtn $w={96}>
              <Icon n="rebar" s={40} />
              生成砌体加筋
            </BigBtn>
          </GroupBody>
          <GroupName $plain>砌体加筋二次编辑</GroupName>
        </Group>
      </Ribbon>

      <FilterRow>
        <Select w={123} h={28} label="楼层" value="第-1层" />
        <Select w={123} h={28} label="类别" value="墙" />
        <Select w={123} h={28} label="类型" value="砌体加筋" />
        <Select w={123} h={28} label="构件" value="" />
      </FilterRow>

      <Work>
        <Panel>
          <CloseStrip />
          <NavTitle>导航栏</NavTitle>
          <NavTools>
            <Icon n="sparkle" s={16} /><span />
            <SquareBtn aria-label="列表"><Icon n="list" /></SquareBtn>
            <SquareBtn aria-label="卡片"><Icon n="card" /></SquareBtn>
          </NavTools>
          <Tree>
            {nav.map(t => (
              <li key={t}>
                <Node><Arrow $open={t === '墙'} />{t}</Node>
                {t === '墙' && (
                  <ul>
                    {walls.map(([icon, name]) => (
                      <LeafRow key={name}><Leaf $on={icon === 'rebar'}><Icon n={icon} />{name}</Leaf></LeafRow>
                    ))}
                  </ul>
                )}
              </li>
            ))}
          </Tree>
        </Panel>

        <MidCol>
          <Panel>
            <CloseStrip />
            <PanelTabs><PanelTab $on>构件列表</PanelTab><PanelTab>图纸管理</PanelTab></PanelTabs>
            <ListTools>
              <ToolBtn><Icon n="newFile" />新建<Caret /></ToolBtn>
              <ToolBtn $off><Icon n="copyOff" c="#bdbdbd" />复制</ToolBtn>
              <ToolBtn $off><Icon n="trashOff" c="#bdbdbd" />删除</ToolBtn>
              <ToolBtn><Icon n="copy" />层间复制</ToolBtn>
              <ToolBtn aria-label="更多"><Icon n="more" s={12} /></ToolBtn>
            </ListTools>
            <ListSearch>
              <PlainInput aria-label="搜索构件" placeholder="搜索构件..." />
              <Icon n="search" s={15} c="#888" />
            </ListSearch>
            <ListBody><li><button>砌体加筋</button></li></ListBody>
          </Panel>
          <Panel $grow>
            <CloseStrip />
            <PanelTabs><PanelTab $on>属性列表</PanelTab><PanelTab>图层管理</PanelTab></PanelTabs>
            <PropArea>
              <PropTable>
                <colgroup><col width="27" /><col width="126" /><col width="141" /><col /></colgroup>
                <thead><tr><th aria-label="序号" /><th>属性名称</th><th>属性值</th><th>附加</th></tr></thead>
                <tbody><tr><th>1</th><td /><td /><td /></tr></tbody>
              </PropTable>
            </PropArea>
          </Panel>
        </MidCol>

        <Stage>
          <Plan />
          <ViewTools>
            <button aria-label="旋转"><Icon n="orbit" /></button>
            <button aria-label="三维"><Icon n="cube3d" /></button>
            <button aria-label="俯视"><Icon n="cubeTop" /><Caret $c="#444" /></button>
            <button aria-label="着色"><Icon n="cubeFill" /><Caret $c="#444" /></button>
            <button aria-label="全屏"><Icon n="frame" /></button>
            <button aria-label="局部"><Icon n="cubeFrame" /></button>
            <hr />
            <button aria-label="显示"><Icon n="listEye" /></button>
          </ViewTools>
        </Stage>
      </Work>

      <Status>
        <Field $w={328}>X = 7457 Y = 32149</Field>
        <Field $w={50}>层高：</Field><Field $w={54}>7.25</Field>
        <Field $w={50}>标高：</Field><Field $w={116}>-7.9~-0.65</Field>
        <Field $w={129}>0</Field>
        <Field $w={45}>隐藏：</Field><Field $w={84}>0</Field>
        <StatBtn aria-label="正交"><Icon n="ortho" /></StatBtn>
        <StatBtn aria-label="矩形捕捉" $wide $on><Icon n="snapRect" /><Caret /></StatBtn>
        <Field $w={3} />
        <StatBtn aria-label="交点"><Icon n="cross" c="#888" /></StatBtn>
        <Field $w={4} />
        <StatBtn aria-label="角度" $wide><Icon n="angle" /><Caret /></StatBtn>
        <StatBtn aria-label="偏移" $wide><Icon n="plusBar" /><Caret /></StatBtn>
        <StatBtn aria-label="图层"><Icon n="layers" /></StatBtn>
        <StatBtn aria-label="曲线"><Icon n="curve" /></StatBtn>
        <Field $w={3} />
        按鼠标左键指定第一个角点，或拾取构件图元
      </Status>

      <Taskbar>
        <SysBtn $w={60} aria-label="开始菜单">
          <svg width="20" height="20" viewBox="0 0 20 20"><path d="M0 3l9-1v7H0zM10 2l10-2v9H10zM0 10h9v8l-9-1zM10 10h10v10l-10-2z" fill="#fff" /></svg>
        </SysBtn>
        <SysBtn $w={60} aria-label="搜索">
          <svg width="22" height="22" viewBox="0 0 22 22" fill="none" stroke="#fff" strokeWidth="1.500"><circle cx="14" cy="8" r="7" /><path d="M9 13l-8 8" /></svg>
        </SysBtn>
        <SysBtn $w={60} aria-label="任务视图">
          <svg width="20" height="20" viewBox="0 0 20 20" fill="none" stroke="#fff" strokeWidth="1.500"><path d="M1 1v3h12V1M1 7h12v7H1zM1 20v-3h12v3M18 1v5M18 12v8M16.500 9h3" /></svg>
        </SysBtn>
        <WebSearch onSubmit={e => e.preventDefault()}>
          <label><Icon n="search" s={20} c="#222" /><PlainInput aria-label="网页搜索" placeholder="歌手宋冬野社交..." /></label>
          <button>百度一下</button>
        </WebSearch>
        <TaskApp aria-label="WPS"><WpsMark s={30} /></TaskApp>
        <TaskApp aria-label="CAD">
          <svg width="30" height="30" viewBox="0 0 30 30"><rect x="1" y="1" width="28" height="28" rx="4" fill="#0f5cb0" stroke="#b8bcc4" strokeWidth="2" /><path d="M10 12H6v8h4M12 20l3-12 3 12M13 17h4M20 12h2l3 2v4l-3 2h-2z" fill="none" stroke="#fff" strokeWidth="1.500" /></svg>
        </TaskApp>
        <TaskApp $on aria-label="GTJ">
          <svg width="30" height="30" viewBox="0 0 30 30"><rect width="30" height="30" rx="5" fill="#d9f2fd" /><path d="M5 6q10 2 20 0v5q-4 2-7 1l1 10q-4 4-7 0l1-10q-5 1-8-2z" fill="#0c95e6" /></svg>
        </TaskApp>
        <TaskApp aria-label="指北针">
          <svg width="30" height="30" viewBox="0 0 30 30"><rect width="30" height="30" rx="5" fill="#3dab8d" /><path d="M15 3l8 4v9l-8 4-8-4V7z" fill="#fff" /><path d="M11 10l4-3 4 3M11 13l4-3 4 3M11 16l4-3 4 3" fill="none" stroke="#3dab8d" strokeWidth="1.500" /><path d="M1 22h28v4q-1 4-5 4H6q-4 0-5-4z" fill="#fff" /><path d="M8 25h14" stroke="#3dab8d" strokeWidth="3" strokeDasharray="4 1" /></svg>
        </TaskApp>
        <TaskApp aria-label="微信">
          <svg width="30" height="26" viewBox="0 0 30 26"><path d="M11 0q11 0 11 9t-11 9l-7 3 1-4Q0 14 0 9q0-9 11-9z" fill="#32cf66" /><path d="M21 9q9 1 9 8 0 4-3 6v3l-4-2q-10 0-11-7 1-8 9-8z" fill="#eee" /><circle cx="7" cy="6" r="1.500" fill="#174" /><circle cx="15" cy="6" r="1.500" fill="#174" /><circle cx="18" cy="14" r="1.200" fill="#777" /><circle cx="24" cy="14" r="1.200" fill="#777" /></svg>
        </TaskApp>
        <TaskApp aria-label="浏览器"><EMark s={29} /></TaskApp>
        <Tray>
          <TrayItem $w={146}>
            <svg width="18" height="16" viewBox="0 0 18 16"><path d="M0 1h18M0 6h18M0 11h18M0 15h18" stroke="#8cc8e8" strokeWidth="1.500" /></svg>
            17°C
          </TrayItem>
          <TrayItem $w={190}>
            <svg width="27" height="20" viewBox="0 0 27 20"><path d="M7 20q-7 0-7-6 0-5 5-6 1-8 9-8 7 0 8 8 5 1 5 6t-5 6z" fill="#bfe3fa" /></svg>
            <Weather>18°C&nbsp; 空气良 53</Weather>
          </TrayItem>
          <TrayItem $w={30}><Icon n="chevUp" s={16} c="#fff" /></TrayItem>
          <TrayItem $w={29}><WpsMark s={16} /></TrayItem>
          <TrayItem $w={29}><EMark s={18} /></TrayItem>
          <TrayItem $w={31}>
            <svg width="19" height="20" viewBox="0 0 19 20"><path d="M9.500 0l9.500 3v7q-1 6-9.500 10Q1 16 0 10V3z" fill="#fff" /><path d="M9.500 2L17 4v6q-1 4-7.500 8Q3 14 2 10V4z" fill="#1f7af0" /><path d="M5 8l4.500 5L14 8l-4.500 2z" fill="#fff" stroke="#fff" /></svg>
          </TrayItem>
          <TrayItem $w={32}>
            <svg width="21" height="16" viewBox="0 0 21 16" fill="none" stroke="#fff" strokeWidth="1.500"><rect x="6" y="4" width="12" height="9" fill="#fff" /><path d="M19 7v3M1 1v3h5V1M3 4v6h3" /></svg>
          </TrayItem>
          <TrayItem $w={27}>
            <svg width="16" height="16" viewBox="0 0 16 16" fill="none" stroke="#fff" strokeWidth="1.200"><path d="M1 15Q2 3 15 1M5 15Q6 7 15 5M9 15q1-5 6-6" /><circle cx="14" cy="14" r="1.500" fill="#fff" /></svg>
          </TrayItem>
          <TrayItem $w={30}>
            <svg width="22" height="18" viewBox="0 0 22 18" fill="none" stroke="#fff" strokeWidth="1.300"><path d="M1 6h3l5-4v14l-5-4H1zM12 6q2 3 0 6M15 4q3 5 0 10M18 2q5 7 0 14" /></svg>
          </TrayItem>
          <TrayItem $w={37}>英</TrayItem>
          <TrayItem $w={19}><Ime>拼</Ime></TrayItem>
          <Clock>19:20<br />2021/10/12</Clock>
          <TrayItem $w={50}>
            <Svg $s={20} viewBox="0 0 20 20" stroke="#fff" strokeWidth="1.300"><path d="M1 1h18v15h-6l-3 3v-3H1z" /></Svg>
          </TrayItem>
        </Tray>
      </Taskbar>

      <Dialog role="dialog" aria-label="选择参数化图形">
        <DlgHead>
          <h2>选择参数化图形</h2>
          <button aria-label="最大化"><Icon n="max" s={19} c="#666" /></button>
          <button aria-label="关闭"><Icon n="close" s={19} c="#777" /></button>
        </DlgHead>
        <DlgForm>
          <span>参数化截面类型：</span>
          <Select w={112} h={32} label="参数化截面类型" value="L形" />
          <div><span>单位：</span><span>mm</span></div>
        </DlgForm>
        <DlgBody>
          <Gallery>
            {shapes.map((s, i) => <Cell key={i} $on={i === 0}><ShapeThumb s={s} /></Cell>)}
          </Gallery>
          <ShapePreview />
        </DlgBody>
        <DlgFoot>
          <DlgBtn $main>确定</DlgBtn>
          <DlgBtn>取消</DlgBtn>
        </DlgFoot>
        <Grip viewBox="0 0 10 10"><path d="M8 0h2v2H8zM4 4h2v2H4zM8 4h2v2H8zM0 8h2v2H0zM4 8h2v2H4zM8 8h2v2H8z" fill="#777" /></Grip>
      </Dialog>

      <Speed>
        <Dial viewBox="0 0 73 73">
          <defs><linearGradient id="ring" x1="0" y1="0" x2="0" y2="1"><stop offset="0" stopColor="#3cc8c0" /><stop offset=".6" stopColor="#7fcf70" /><stop offset="1" stopColor="#d8c030" /></linearGradient></defs>
          <circle cx="36.500" cy="36.500" r="36" fill="#2c3343" stroke="#555c68" />
          <path d="M37 5a32 32 0 1 1-24 53" stroke="url(#ring)" strokeWidth="2" />
          <text x="15" y="46" fontSize="28" fill="#ddd" fontWeight="300">63<tspan fontSize="14">%</tspan></text>
        </Dial>
        <Rates>
          <svg width="9" height="10" viewBox="0 0 9 10"><path d="M4.500 10V1M1 5l3.500-4L8 5" fill="none" stroke="#49b4f0" strokeWidth="2" /></svg>
          <span><b>0</b>K/s</span>
          <svg width="9" height="10" viewBox="0 0 9 10"><path d="M4.500 0v9M1 5l3.500 4L8 5" fill="none" stroke="#3ab54a" strokeWidth="2" /></svg>
          <span><b>0</b>K/s</span>
        </Rates>
      </Speed>
    </Page>
  );
}
